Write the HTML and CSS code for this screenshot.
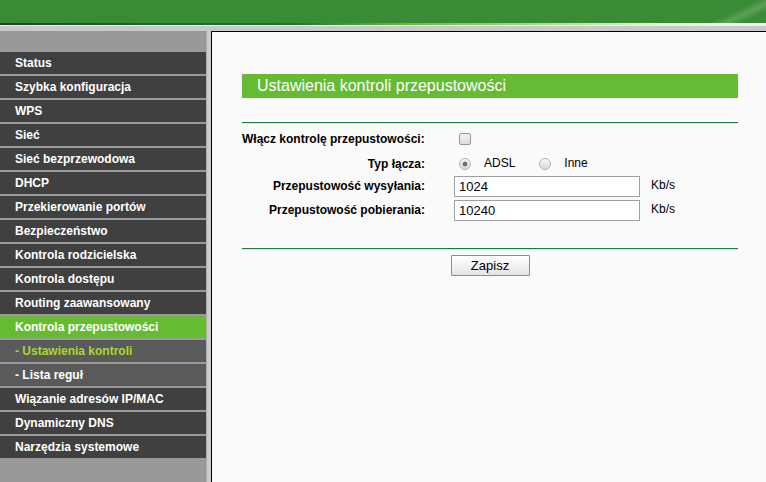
FILE: index.html
```html
<!DOCTYPE html>
<html lang="pl">
<head>
    <meta charset="UTF-8">
    <meta name="viewport" content="width=device-width, initial-scale=1.0">
    <title>Ustawienia kontroli przepustowości</title>
    <link rel="stylesheet" href="styles.css">
</head>
<body>
    <div id="header">
        <div class="top"></div>
        <div class="stripe"></div>
        <div class="rule"></div>
    </div>

    <div id="page">
        <div id="sidebar">
            <ul>
                <li><a href="#">Status</a></li>
                <li><a href="#">Szybka konfiguracja</a></li>
                <li><a href="#">WPS</a></li>
                <li><a href="#">Sieć</a></li>
                <li><a href="#">Sieć bezprzewodowa</a></li>
                <li><a href="#">DHCP</a></li>
                <li><a href="#">Przekierowanie portów</a></li>
                <li><a href="#">Bezpieczeństwo</a></li>
                <li><a href="#">Kontrola rodzicielska</a></li>
                <li><a href="#">Kontrola dostępu</a></li>
                <li><a href="#">Routing zaawansowany</a></li>
                <li><a class="action" href="#">Kontrola przepustowości</a></li>
                <li><a class="sub current" href="#">- Ustawienia kontroli</a></li>
                <li><a class="sub" href="#">- Lista reguł</a></li>
                <li><a href="#">Wiązanie adresów IP/MAC</a></li>
                <li><a href="#">Dynamiczny DNS</a></li>
                <li><a href="#">Narzędzia systemowe</a></li>
            </ul>
        </div>

        <div id="content">
            <div class="title">Ustawienia kontroli przepustowości</div>
            <div class="line"></div>

            <div class="form">
                <div class="row row-first">
                    <label class="label" for="enable">Włącz kontrolę przepustowości:</label>
                    <div class="field"><input type="checkbox" id="enable"></div>
                </div>
                <div class="row row-radio">
                    <span class="label">Typ łącza:</span>
                    <div class="field">
                        <input type="radio" name="link" id="adsl" checked>
                        <label class="opt opt-first" for="adsl">ADSL</label>
                        <input type="radio" name="link" id="other">
                        <label class="opt" for="other">Inne</label>
                    </div>
                </div>
                <div class="row row-input">
                    <label class="label" for="up">Przepustowość wysyłania:</label>
                    <div class="field">
                        <input class="text" type="text" id="up" value="1024">
                        <span class="unit">Kb/s</span>
                    </div>
                </div>
                <div class="row row-input">
                    <label class="label" for="down">Przepustowość pobierania:</label>
                    <div class="field">
                        <input class="text" type="text" id="down" value="10240">
                        <span class="unit">Kb/s</span>
                    </div>
                </div>
            </div>

            <div class="line line-bottom"></div>
            <div class="actions">
                <button class="button">Zapisz</button>
            </div>
        </div>
    </div>
</body>
</html>
```

FILE: styles.css
```css
body {
    font-family: "Liberation Sans", Arial, sans-serif;
    margin: 0;
    padding: 0;
    height: 100vh;
    display: flex;
    flex-direction: column;
    overflow: hidden;
}

/* naglowek */
#header .top {
    height: 23px;
    background-color: #3a8b36;
    background-image: linear-gradient(155deg, transparent 93%, rgba(255, 255, 255, 0.18) 95%, transparent 97%);
}

#header .stripe {
    height: 2px;
    background: linear-gradient(90deg, #2c3a31 0%, #1b6440 20%, #1f6e3e 38%, #66b83a 52%, #a9d78c 70%, #e4f2dc 86%, #ffffff 100%);
}

#header .rule {
    height: 5px;
    border-top: 1px solid #ececec;
    background-color: #c9c9c9;
}

#page {
    flex: 1;
    display: flex;
}

/* menu */
#sidebar {
    width: 206px;
    background-color: #999999;
    border-right: 1px solid #aaaaaa;
    box-shadow: 4px 0 0 #cccccc;
    margin-right: 4px;
    padding-top: 21px;
}

#sidebar ul {
    list-style: none;
    margin: 0;
    padding: 0;
}

#sidebar ul li {
    margin: 0 0 2px 0;
}

#sidebar ul li a {
    display: block;
    height: 22px;
    line-height: 22px;
    padding-left: 15px;
    background-color: #404040;
    color: #ffffff;
    font-size: 12px;
    font-weight: bold;
    text-decoration: none;
}

#sidebar ul li a.action {
    background-color: #66bb33;
}

#sidebar ul li a.sub {
    background-color: #5a5a5a;
}

#sidebar ul li a.current {
    color: #a9d82e;
}

/* tresc */
#content {
    flex: 1;
    background-color: #fafafa;
    border-left: 1px solid #000000;
    border-top: 1px solid #000000;
    padding: 42px 0 0 30px;
}

.title {
    width: 481px;
    height: 24px;
    line-height: 24px;
    padding-left: 15px;
    background-color: #66bb33;
    color: #ffffff;
    font-size: 16px;
}

.line {
    width: 496px;
    height: 1px;
    margin-top: 24px;
    background-color: #187a3c;
    border-bottom: 1px solid #dbe8dc;
}

.line-bottom {
    margin-top: 26px;
}

.form {
    width: 496px;
}

.row {
    display: flex;
    align-items: center;
    height: 24px;
}

.row-first {
    height: 30px;
}

.row-radio {
    height: 20px;
}

.label {
    width: 183px;
    text-align: right;
    font-size: 12px;
    font-weight: bold;
    color: #000000;
    white-space: nowrap;
}

.row-first .label {
    text-align: left;
}

.field {
    display: flex;
    align-items: center;
    margin-left: 29px;
    font-size: 12px;
}

input[type="checkbox"],
input[type="radio"] {
    appearance: none;
    -webkit-appearance: none;
    width: 12px;
    height: 12px;
    margin: 0 0 0 5px;
    border: 1px solid #a2a2a2;
    background: linear-gradient(#f6f6f6, #dadada);
}

input[type="checkbox"] {
    border-radius: 2px;
    border-color: #979797;
}

input[type="radio"] {
    border-radius: 50%;
    border-color: #b4b4b4;
}

input[type="radio"]:checked {
    background: radial-gradient(circle, #6e6e6e 0, #6e6e6e 2px, transparent 2.8px), linear-gradient(#f6f6f6, #dadada);
}

.opt {
    margin-left: 13px;
    margin-top: -3px;
    color: #000000;
}

.opt-first {
    margin-right: 19px;
}

.text {
    width: 180px;
    height: 19px;
    margin: 0;
    padding: 0 0 0 4px;
    border: 1px solid #a0a0a0;
    background-color: #ffffff;
    font-family: "Liberation Sans", Arial, sans-serif;
    font-size: 13px;
    color: #000000;
}

.unit {
    margin-left: 11px;
    margin-top: -3px;
    font-size: 12px;
    color: #000000;
}

.actions {
    width: 496px;
    display: flex;
    justify-content: center;
    padding-top: 5px;
}

.button {
    width: 79px;
    height: 21px;
    padding: 0;
    border: 1px solid #8c8c8c;
    border-radius: 1px;
    background: linear-gradient(#ffffff, #e4e4e4);
    font-family: "Liberation Sans", Arial, sans-serif;
    font-size: 13px;
    color: #000000;
}
```
